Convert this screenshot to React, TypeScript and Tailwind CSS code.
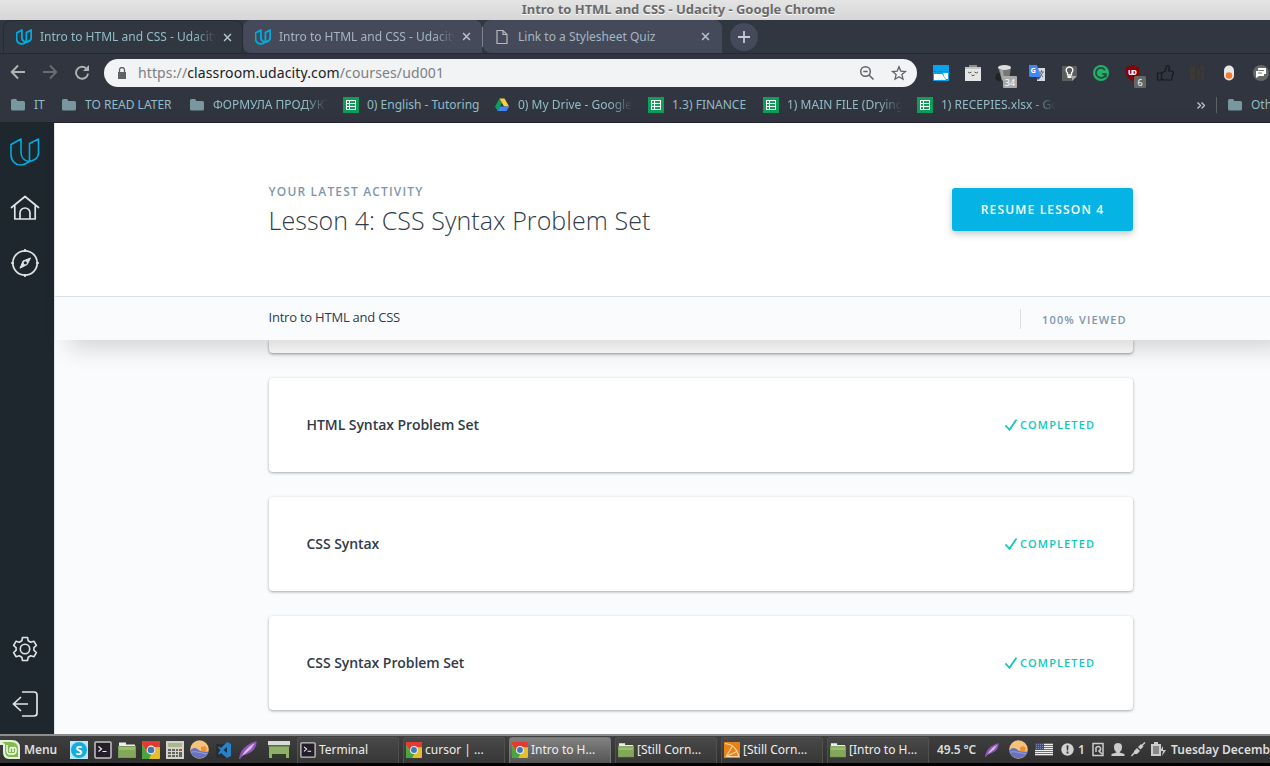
import React from "react";

type IconProps = { className?: string };

const Udacity = ({ className = "" }: IconProps) => (
  <svg className={className} viewBox="0 0 30 28" fill="none" stroke="currentColor" strokeLinejoin="round">
    <path d="M11 27C5 27 1 22.5 1 16.5V6.500L11 1v13.500C11 19.500 14.500 23 19.500 23.500V5.500L28.500 1v14C28.500 20 24.500 22.500 19.500 23.500 17 25 14.500 27 11 27z" />
  </svg>
);

const Folder = () => (
  <svg className="size-4 shrink-0 -ml-px" viewBox="0 0 16 16" fill="#78979e">
    <path d="M1 3.500Q1 2 2.500 2H6l1.500 2h6Q15 4 15 5.500V12q0 1.500-1.500 1.500h-11Q1 13.500 1 12z" />
  </svg>
);

const Sheet = () => (
  <svg className="size-4 shrink-0" viewBox="0 0 16 16">
    <path fill="#0f9d58" d="M0 0h16v16H0z" />
    <path fill="#fff" d="M3 3h10v10H3z" />
    <path fill="#0f9d58" d="M4 4h2v2H4zM7 4h5v2H7zM4 7h2v2H4zM7 7h5v2H7zM4 10h2v2H4zM7 10h5v2H7z" />
  </svg>
);

const Drive = () => (
  <svg className="size-4 shrink-0 -ml-px" viewBox="0 0 16 16">
    <path fill="#0f9d58" d="M5.500 1.500 8 6 3.500 14 1 9.500z" />
    <path fill="#ffcd40" d="M5.500 1.500h5L15 9.500h-5z" />
    <path fill="#4285f4" d="M6 9.500h9.300L12.500 14h-9z" />
  </svg>
);

const Close = () => (
  <svg className="size-[9px] shrink-0" viewBox="0 0 10 10" stroke="#b4c3cc" strokeWidth="1.700">
    <path d="M1.200 1.200l7.600 7.600M8.800 1.200 1.200 8.800" />
  </svg>
);

const Chrome = ({ className = "size-[18px]" }: IconProps) => (
  <svg className={className} viewBox="0 0 18 18">
    <rect width="18" height="18" rx="1" fill="#e8bd2b" />
    <path d="M0 1Q0 0 1 0h16q1 0 1 1v5H8L5 11 0 3z" fill="#e23b32" />
    <path d="M0 3l5.500 9L10 12l-3 6H1q-1 0-1-1z" fill="#4ba53f" />
    <circle cx="9" cy="9" r="4.400" fill="#f1f1ee" />
    <circle cx="9" cy="9" r="3.300" fill="#3d78bd" />
  </svg>
);

const Files = ({ className = "size-[18px]" }: IconProps) => (
  <svg className={className} viewBox="0 0 18 18">
    <path d="M1 1.500h7v2h9V8H1z" fill="#eee" />
    <path d="M0 5h18v12H0z" fill="#84a85b" />
    <path d="M0 5h18v4H0z" fill="#9bbd70" />
    <path d="M.5 5.500h17v11H.5z" fill="none" stroke="#7a9b55" />
  </svg>
);

const Term = ({ className = "size-[18px]" }: IconProps) => (
  <svg className={className} viewBox="0 0 18 18" fill="none">
    <rect x="1" y="1" width="16" height="16" rx="1" fill="#231e29" stroke="#c4c4c4" strokeWidth="1.500" />
    <path d="m4.500 5.500 3 2.500-3 2.500M8.500 10.500h4" stroke="#eee" strokeWidth="1.200" />
  </svg>
);

const Feather = ({ className = "size-[18px]" }: IconProps) => (
  <svg className={className} viewBox="0 0 18 18">
    <path d="M0 18C1 9 7 3 17.500 0 18 7 13 13 4.500 14L1 18z" fill="#8e55b5" />
    <path d="M3 15C6 9 10 5 16 2l-4 6-6 5z" fill="#d9b7ea" />
  </svg>
);

const Weather = () => (
  <svg className="size-[19px]" viewBox="0 0 20 20">
    <circle cx="10" cy="10" r="9.800" fill="#f5c27c" />
    <circle cx="14.500" cy="9.500" r="3" fill="#ee8f31" />
    <path d="M.3 11C2.500 8 5 7.500 8 9.500c3 2.500 5 3.500 11.500 2.500A9.800 9.800 0 0 1 .3 11" fill="#6772c0" />
    <path d="M1 13c5-2 10 1 17 1.500" stroke="#98a5dc" fill="none" />
  </svg>
);

const Scratch = () => (
  <svg className="size-[16px]" viewBox="0 0 16 16" fill="none">
    <path d="M0 0h16v16H0z" fill="#e88118" />
    <path d="M1 1.500C8 2 13 7 15 15M2 14.500 8.500 4M2 14.500l11-5M2 14.500h12" stroke="#fbd8aa" strokeWidth="1.200" />
  </svg>
);

const Tab = ({ title, width, kind }: { title: string; width: string; kind: "active" | "site" | "file" }) => (
  <div className={`flex h-[33px] shrink-0 items-center ${kind === "file" ? "pl-[10px]" : "pl-3"} ${width} ${kind === "active" ? "rounded-t-lg border border-b-0 border-[#252b33] bg-[#303740]" : "rounded-t-lg rounded-bl-lg bg-[#444a5a]"}`}>
    {kind === "file" ? (
      <svg className="mr-2 ml-px size-4 shrink-0" viewBox="0 0 16 16" fill="none" stroke="#b9b9bb" strokeWidth="1.200">
        <path d="M3 1.500h6L13 5.500v9H3zM9 1.500v4h4" />
      </svg>
    ) : (
      <Udacity className="mr-2 h-4 w-4 shrink-0 stroke-[3.4] text-[#02abdf]" />
    )}
    <span className={`w-[176px] overflow-hidden text-[12px] whitespace-nowrap ${kind === "active" ? "text-[#93bcc6]" : "text-[#a7b5c1]"} ${kind !== "file" ? "mask-r-from-88%" : ""}`}>{title}</span>
    <span className="ml-[7px]"><Close /></span>
  </div>
);

const Bookmark = ({ text, width, icon, fade = false }: { text: string; width: string; icon: React.ReactNode; fade?: boolean }) => (
  <div className={`flex shrink-0 items-center gap-2 ${width}`}>
    {icon}
    <span className={`overflow-hidden whitespace-nowrap ${fade ? "w-[115px] mask-r-from-80%" : ""}`}>{text}</span>
  </div>
);

const Extensions = () => (
  <div className="flex shrink-0 [&>*]:h-8 [&>*]:w-8 [&>*]:shrink-0">
    <svg viewBox="0 0 32 32"><path d="M8 8h16v16H8z" fill="#04a5ee" /><path d="M9 17h8l4 6H9z" fill="#fff" /><path d="M18 16h5v6h-2q-2-2-3-6" fill="#fff" /><path d="M8 14h16v1H8z" fill="#0588d3" /></svg>
    <svg viewBox="0 0 32 32"><path d="M12 8h8v3h-8z" fill="#8b8b8b" /><path d="M8 10h16v14H8z" fill="#e5e5e5" /><path d="M8 10h16v2H8z" fill="#c5c5c5" /><path d="M11 15q1.500 2 3.500 0M17.500 15q2 2 3.500 0M14.500 18q1.500 1.500 3 0" stroke="#555" fill="none" /></svg>
    <svg viewBox="0 0 32 32"><path d="M6 20q2-4 6-6l4 9-6 1q-4-1-4-4" fill="#202225" /><path d="M9 10h13l-2 14h-7z" fill="#777" /><ellipse cx="15.500" cy="10.500" rx="6.500" ry="2.500" fill="#ddd" /><path d="M11 13h3l1 10h-2z" fill="#a5a5a5" /><rect x="14" y="19" width="14" height="12" rx="1" fill="#aaa" /><text x="21" y="28.500" textAnchor="middle" fill="#fff" fontSize="9" fontFamily="Noto Sans">34</text></svg>
    <svg viewBox="0 0 32 32"><path d="M16 11h8v13h-8z" fill="#d7d9de" /><path d="M8 8h8l4 12H9L8 19z" fill="#4285f4" /><path d="M15 20h5l-3 3z" fill="#2450a8" /><text x="9.500" y="16" fill="#fff" fontSize="7.500" fontWeight="700" fontFamily="Noto Sans">G</text><path d="M18 15h5M20.500 13v2M19 20l3-5M19 16l3 4" stroke="#66717a" /></svg>
    <svg viewBox="0 0 32 32"><path d="M9 9h15v10l-5 5H9z" fill="#5d5d5d" /><path d="M19 24v-5h5z" fill="#aaa" /><path d="M14.500 18v-2q-2-2-1-4.500 3-3 6 0 1 2.500-1 4.500v2z" fill="none" stroke="#fff" strokeWidth="1.300" /><path d="M14.500 19h4v2h-4z" fill="#fff" /></svg>
    <svg viewBox="0 0 32 32"><circle cx="16" cy="16" r="8" fill="#20b16b" /><path d="M20 13a5 5 0 1 0 .8 4H17M20.800 17v3.500" stroke="#27483f" strokeWidth="1.700" fill="none" /></svg>
    <svg viewBox="0 0 32 32"><path d="M15.500 8q3 2 6.500 2v5q0 6-6.500 9Q9 21 9 15v-5q3.500 0 6.500-2" fill="#870006" /><text x="11" y="18" fill="#fff" fontSize="7" fontWeight="800" fontFamily="Noto Sans" textLength="9">UD</text><rect x="17" y="19" width="12" height="12" rx="1.500" fill="#666" /><text x="23" y="28.500" textAnchor="middle" fill="#fff" fontSize="9" fontFamily="Noto Sans">6</text></svg>
    <svg viewBox="0 0 32 32" fill="none" stroke="#17191d" strokeWidth="1.200"><path d="M8.500 16h4v7h-4zM12.500 16.500l4-3 1-4.500q2-1.500 3 1l-1 4h4q2 2 0 4l-1 5h-8l-2-1" /></svg>
    <svg viewBox="0 0 32 32" fill="#3a3938"><path d="M9 9h14v14H9z" /><path d="m15 9 1 4-2 3 2 3-1 4M18 9l1 4 2 2-2 3v5" stroke="#30312f" fill="none" /></svg>
    <svg viewBox="0 0 32 32"><rect x="11" y="8.500" width="10" height="15" rx="5" fill="#e7e7e5" /><circle cx="16" cy="18.500" r="3.300" fill="#f47c2b" /></svg>
    <svg viewBox="0 0 32 32"><circle cx="16" cy="16" r="8" fill="#676767" /><path d="M13 11h8v6h-7zM11 14h8v5h-5l-3 2z" fill="#fff" /><path d="M14 13.500h5M13 16h4" stroke="#777" /></svg>
  </div>
);

const Lesson = ({ title }: { title: string }) => (
  <div className="flex h-[94px] w-[864px] items-center justify-between rounded bg-white pr-[38px] pl-[37.500px] shadow-[0_1px_3px_rgba(15,35,35,.38)]">
    <span className="pb-[2px] text-[14px] font-semibold tracking-[-0.060px] text-[#303b48]">{title}</span>
    <span className="flex w-[90px] items-center text-[11px] font-semibold tracking-[1.120px] text-[#0bc9ba]">
      <svg className="mr-[3px] size-3 shrink-0" viewBox="0 0 12 12" fill="none" stroke="currentColor" strokeWidth="1.800" strokeLinecap="round"><path d="m1 7 3.500 3.800L11 1.200" /></svg>
      COMPLETED
    </span>
  </div>
);

const Task = ({ text, icon, active = false }: { text: string; icon: React.ReactNode; active?: boolean }) => (
  <div className={`mr-1 flex h-[26px] w-[102px] shrink-0 items-center gap-[3px] rounded-t-[3px] border-x border-t pb-[2px] pl-[2px] text-[12px] whitespace-nowrap text-[#eee] ${active ? "border-[#777] bg-linear-to-b from-[#818181] to-[#545454]" : "border-[#505050] bg-linear-to-b from-[#484848] to-[#373737]"}`}>
    <span className="w-4 shrink-0">{icon}</span><span>{text}</span>
  </div>
);

export default function App() {
  return (
    <div className="flex h-[766px] w-[1270px] flex-col overflow-hidden bg-black font-['Noto_Sans',sans-serif]">
      <header className="h-[123px] shrink-0 bg-[#30353f]">
        <div className="h-5 bg-linear-to-b from-[#e4e4e4] to-[#d6d6d6] pl-[87px] text-center text-[13px] leading-[19px] font-bold tracking-[-0.040px] text-[#69696a] [text-shadow:0_1px_0_#fff]">Intro to HTML and CSS - Udacity - Google Chrome</div>
        <div className="flex h-[34px] items-center border-b border-[#242a32] bg-[#303740] pl-[3px]">
          <Tab title="Intro to HTML and CSS - Udacity" width="w-[240px]" kind="active" />
          <Tab title="Intro to HTML and CSS - Udacity" width="w-[239px]" kind="site" />
          <div className="h-5 w-px shrink-0 bg-[#7b828e]" />
          <Tab title="Link to a Stylesheet Quiz" width="w-[239px]" kind="file" />
          <div className="ml-2 flex size-7 items-center justify-center rounded-full bg-[#444a5a]">
            <svg className="size-3" viewBox="0 0 12 12" stroke="#c2ccd4" strokeWidth="1.800"><path d="M6 0v12M0 6h12" /></svg>
          </div>
        </div>
        <div className="flex h-[37px] items-center">
          <div className="flex w-[104px] shrink-0 items-center pb-px pl-[10px]">
            <svg className="h-4 w-20" viewBox="0 0 80 16" fill="none" strokeWidth="1.900">
              <path d="M15 8H2M8 1.500 1.700 8 8 14.500" stroke="#b3b3b5" />
              <path d="M33 8h13M40 1.500 46.300 8 40 14.500" stroke="#686c73" />
              <path d="M76 4.200A6 6 0 1 0 78 9.700" stroke="#b3b3b5" />
              <path d="M79 1v6h-6z" fill="#b3b3b5" />
            </svg>
          </div>
          <div className="flex h-7 w-[813px] shrink-0 items-center rounded-full bg-[#f1f3f4] pr-[10px] pl-3 text-[14px] text-[#7c8084]">
            <svg className="mr-[10px] size-3" viewBox="0 0 12 12"><path d="M2 5h8v7H2z" fill="#5f6368" /><path d="M3.500 5V3a2.500 2.500 0 0 1 5 0v2" stroke="#5f6368" strokeWidth="1.300" fill="none" /></svg>
            <span className="tracking-[0.120px] whitespace-nowrap">https://<span className="text-[#202124]">classroom.udacity.com</span>/courses/ud001</span>
            <svg className="ml-auto h-4 w-12" viewBox="0 0 48 16" fill="none" stroke="#5f6368" strokeWidth="1.500">
              <circle cx="6.500" cy="6.500" r="4.800" /><path d="M4.300 6.500h4.400M10 10l4.500 4.500" />
              <path d="m40 1.700 1.800 4.400 4.700.4-3.600 3.100 1.100 4.600-4-2.500-4 2.500 1.100-4.600-3.600-3.100 4.700-.4z" strokeWidth="1.300" />
            </svg>
          </div>
          <div className="pl-2"><Extensions /></div>
        </div>
        <div className="flex h-7 items-center overflow-hidden pl-[11px] text-[12px] text-[#93bcc6]">
          <Bookmark icon={<Folder />} text="IT" width="w-[51px]" />
          <Bookmark icon={<Folder />} text="TO READ LATER" width="w-[128px]" />
          <Bookmark icon={<Folder />} text="ФОРМУЛА ПРОДУКТ" width="w-[153px]" fade />
          <Bookmark icon={<Sheet />} text="0) English - Tutoring" width="w-[152px]" />
          <Bookmark icon={<Drive />} text="0) My Drive - Google Drive" width="w-[153px]" fade />
          <Bookmark icon={<Sheet />} text="1.3) FINANCE" width="w-[115px]" />
          <Bookmark icon={<Sheet />} text="1) MAIN FILE (Drying)" width="w-[154px]" fade />
          <Bookmark icon={<Sheet />} text="1) RECEPIES.xlsx - Google" width="w-[280px]" fade />
          <svg className="mr-[11px] h-[7px] w-2 shrink-0" viewBox="0 0 8 7" fill="none" stroke="#c0c3c7" strokeWidth="1.400"><path d="m.5.5 3 3-3 3M4.500.5l3 3-3 3" /></svg>
          <div className="mr-[11px] h-4 w-px shrink-0 bg-[#5b626a]" />
          <Bookmark icon={<Folder />} text="Other bookmarks" width="w-[130px]" />
        </div>
        <div className="mt-[3px] h-px bg-[#22232b]" />
      </header>

      <div className="flex h-[611px] shrink-0">
        <aside className="flex w-[54px] shrink-0 flex-col items-center bg-[#1e272e] pt-[15px] pb-[17px] text-[#dfe5e7]">
          <Udacity className="-ml-1 h-7 w-[30px] stroke-[1.6] text-[#02abdf]" />
          <svg className="mt-[29px] -ml-1 h-[26px] w-[30px]" viewBox="0 0 30 26" fill="none" stroke="currentColor" strokeWidth="1.700" strokeLinecap="round" strokeLinejoin="round"><path d="M1.500 12.500 15 1.500l13.500 11M4.800 11v13h20.400V11M10 24v-6a5 5 0 0 1 10 0v6" /></svg>
          <svg className="mt-[27px] -ml-1 size-[30px]" viewBox="0 0 30 30" fill="none" stroke="currentColor" strokeWidth="1.700"><circle cx="15" cy="15" r="12.200" /><path d="M15 1v3M15 26v3M1 15h3M26 15h3" /><path d="m20.500 10-3.300 6.500-7.200 3.700 3-7.200z" fill="currentColor" strokeWidth="1" /><circle cx="15.300" cy="14.800" r="1.600" fill="#1e272e" stroke="none" /></svg>
          <svg className="mt-auto -ml-1 size-[26px]" viewBox="0 0 26 26" fill="none" stroke="currentColor" strokeWidth="1.600" strokeLinejoin="round"><circle cx="13" cy="13" r="4.700" /><path d="M10.500 1.500h5l.7 3.300 2.500 1.500 3.300-1 2.400 4.200-2.500 2.200v2.600l2.500 2.200-2.400 4.200-3.300-1-2.500 1.500-.7 3.300h-5l-.7-3.300-2.500-1.500-3.300 1-2.400-4.200 2.500-2.200v-2.600L1.600 9.500 4 5.300l3.300 1 2.500-1.500z" /></svg>
          <svg className="mt-[29px] -ml-1 size-[26px]" viewBox="0 0 26 26" fill="none" stroke="currentColor" strokeWidth="1.700"><path d="M10 1h12q3 0 3 3v18q0 3-3 3H10M16 13H1.500M9 6l-7.500 7L9 20" /></svg>
        </aside>
        <main className="flex min-w-0 grow flex-col border-l border-[#e2e6ea] bg-[#fafbfd] font-['Open_Sans',sans-serif]">
          <section className="relative z-10 h-[217px] shrink-0 bg-white shadow-[14px_8px_22px_0_rgba(20,20,20,.17)]">
            <div className="flex h-[173px] justify-between pt-[60px] pr-[137px] pl-[213.500px]">
              <div>
                <p className="text-[12px] leading-[17px] font-semibold tracking-[1.170px] text-[#7d97ad]">YOUR LATEST ACTIVITY</p>
                <h1 className="mt-[3px] text-[25px] leading-[35px] font-light tracking-[0.070px] whitespace-nowrap text-[#303b48]">Lesson 4: CSS Syntax Problem Set</h1>
              </div>
              <button className="mt-[5px] h-[43px] w-[181px] rounded-[3px] bg-[#05b3e5] text-[12px] font-semibold tracking-[1.180px] text-white shadow-[0_3px_7px_rgba(20,50,50,.27)]">RESUME LESSON 4</button>
            </div>
            <div className="flex h-11 items-center justify-between border-t border-[#d9e1e7] bg-[#fafbfd] pr-[137px] pl-[213.500px]">
              <span className="pb-[2px] text-[13px] tracking-[-0.220px] text-[#303b48]">Intro to HTML and CSS</span>
              <span className="flex h-5 w-[113px] items-center border-l border-[#dae0e5] pt-[4px] pl-[21px] text-[11px] font-semibold tracking-[1.150px] whitespace-nowrap text-[#7d97ad]">100% VIEWED</span>
            </div>
          </section>
          <section className="flex grow flex-col gap-[25px] pl-[214px]">
            <div className="h-[13px] w-[864px] shrink-0 rounded-b bg-white shadow-[0_1px_3px_rgba(15,35,35,.45)]" />
            <Lesson title="HTML Syntax Problem Set" />
            <Lesson title="CSS Syntax" />
            <Lesson title="CSS Syntax Problem Set" />
          </section>
        </main>
      </div>

      <footer className="flex h-[29px] shrink-0 items-center overflow-hidden border-t-2 border-[#8c8c8c] bg-linear-to-b from-[#3f3f3f] to-[#303030] text-[12px] font-semibold text-[#ddd]">
        <svg className="h-5 w-[21px] shrink-0" viewBox="0 0 21 20" fill="none"><path d="M0 0h12q8 0 8 8v11H9q-6 0-6-7V5H0z" fill="#e5f1df" /><path d="M2 2h9q7 0 7 7v8h-8q-5 0-5-6V4z" fill="#82bb4d" /><path d="M7 5v6q0 3 3 3h3q3 0 3-3V9q0-1.500-1.500-1.500T13 9v3M13 9q0-1.500-1.500-1.500T10 9v3" stroke="#fff" strokeWidth="1.300" /></svg>
        <span className="ml-[3px] w-[46px] shrink-0 tracking-[-0.100px]">Menu</span>
        <div className="flex w-[189px] shrink-0 items-center gap-[6px]">
          <svg className="size-[18px] shrink-0" viewBox="0 0 18 18"><path d="M0 0h18v18H0z" fill="#b9e9fa" /><circle cx="9" cy="9" r="8" fill="#16acdf" /><text x="9" y="13.500" fill="#fff" fontSize="12.500" textAnchor="middle" fontWeight="700">S</text></svg>
          <Term /><Files /><Chrome />
          <svg className="size-[18px]" viewBox="0 0 18 18"><path d="M0 0h18v18H0z" fill="#d4d3ca" /><path d="M2 2h14v4H2z" fill="#a9b98d" /><path d="M2 8h3v2H2zM6 8h3v2H6zM10 8h2v2h-2zM13 8h3v2h-3zM2 11h3v2H2zM6 11h3v2H6zM10 11h2v2h-2zM2 14h3v2H2zM6 14h3v2H6zM10 14h2v2h-2z" fill="#65635d" /><path d="M13 8h3v2h-3z" fill="#b24a41" /><path d="M13 11h3v5h-3z" fill="#65635d" /></svg>
          <Weather />
          <svg className="size-[18px]" viewBox="0 0 18 18"><path d="M1 3h14v14H1z" fill="#292d31" /><path d="m12 1 4 2v12l-4 2-6-5-2 1.500-1-.8L5.500 9 3 6.300l1-.8L6 7zM12 6 8.500 9l3.500 3z" fill="#2383cc" /></svg>
          <Feather />
        </div>
        <svg className="ml-[9px] h-[18px] w-[22px] shrink-0" viewBox="0 0 22 18"><path d="M0 0h22v4H0z" fill="#d9d9d9" /><path d="M1 4h20v13H1z" fill="#8eb069" /><path d="M0 4h22v1.500H0z" fill="#556d3d" /><path d="M4 13h14v5H4z" fill="#303b29" /></svg>
        <div className="ml-[7px] flex shrink-0 self-end font-normal">
          <Task text="Terminal" icon={<Term className="size-4" />} />
          <Task text="cursor | ..." icon={<Chrome className="size-4" />} />
          <Task text="Intro to H..." icon={<Chrome className="size-4" />} active />
          <Task text="[Still Corn..." icon={<Files className="size-4" />} />
          <Task text="[Still Corn..." icon={<Scratch />} />
          <Task text="[Intro to H..." icon={<Files className="size-4" />} />
        </div>
        <span className="ml-1 w-[48px] shrink-0 tracking-[-0.100px] whitespace-nowrap">49.5 °C</span>
        <Feather className="mr-[10px] size-[14px] shrink-0" />
        <span className="mr-[7px] shrink-0"><Weather /></span>
        <svg className="h-[13px] w-[18px] shrink-0" viewBox="0 0 18 13"><path d="M0 0h18v13H0z" fill="#eee" /><path d="M0 .5h18M0 2.500h18M0 4.500h18M0 6.500h18M0 8.500h18M0 10.500h18M0 12.500h18" stroke="#c44b50" /><path d="M0 0h9v7H0z" fill="#3b4c82" /><path d="M1 1.500h7M1 3.500h7M1 5.500h7" stroke="#7f8cb5" strokeDasharray="1 1" /></svg>
        <svg className="ml-2 size-[13px] shrink-0" viewBox="0 0 13 13"><circle cx="6.500" cy="6.500" r="6.200" fill="#d1d1d1" /><path d="M5.500 2.500h2l-.4 5H5.900zM5.600 8.500h1.800v2H5.600z" fill="#333" /></svg>
        <span className="ml-1 w-[14px] shrink-0">1</span>
        <svg className="h-[15px] w-[79px] shrink-0" viewBox="0 0 79 15" fill="#ccc">
          <path d="M1 1.500h10v12H1z" fill="none" stroke="#ccc" strokeWidth="1.500" /><path d="M4 10V7.500a2.300 2.300 0 1 1 3 1.500l3 3" fill="none" stroke="#ccc" strokeWidth="1.500" />
          <path d="M22.500 8q-2-7 3.500-7t3.500 7l-2 2.500 5 1.500v2H19.500v-2l5-1.500z" />
          <path d="m39.500 14 3.500-4" stroke="#ccc" strokeWidth="1.500" /><path d="m42 9 3-3 3 3-3 3h-3zM46 5l3-3 2.500 2.500-3 3z" /><path d="m50 3.500 3-3" stroke="#ccc" strokeWidth="1.500" />
          <path d="M59 2h3V0h4v2h3v12H59z" /><path d="M61 4h6v8h-6z" fill="#888" /><path d="M71 4l-3 5h3l-1 5 4-6h-3z" />
        </svg>
        <span className="shrink-0 whitespace-nowrap">Tuesday December 25</span>
      </footer>
    </div>
  );
}
